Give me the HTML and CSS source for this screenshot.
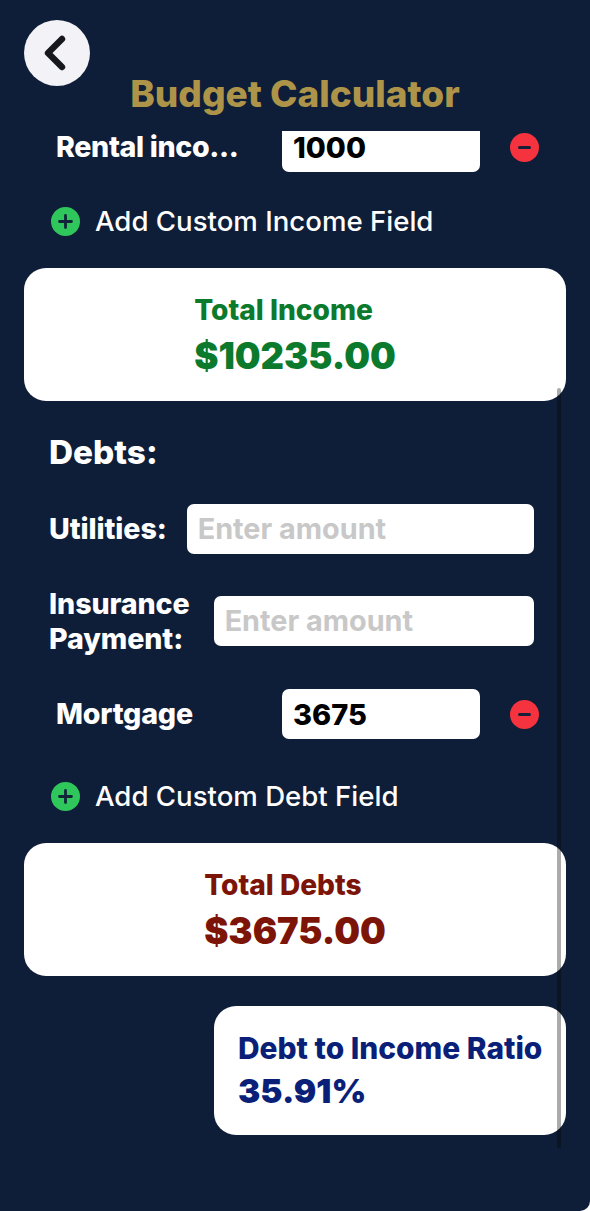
FILE: index.html
```html
<!DOCTYPE html>
<html lang="en">
<head>
<meta charset="utf-8">
<title>Budget Calculator</title>
<link rel="stylesheet" href="styles.css">
</head>
<body>
<main class="screen">
  <header class="header">
    <button class="back" aria-label="Back">
      <svg width="26" height="36" viewBox="0 0 26 36"><path d="M20 4 L6 18 L20 32" fill="none" stroke="#16181d" stroke-width="6.4" stroke-linecap="round" stroke-linejoin="round"/></svg>
    </button>
    <h1 class="title">Budget Calculator</h1>
  </header>
  <div class="scroll">
    <div class="content">
      <div class="custom-row cropped">
        <span class="custom-label rental">Rental inco...</span>
        <div class="field custom-field value">1000</div>
        <svg class="remove" viewBox="0 0 29 29"><circle cx="14.5" cy="14.5" r="14.5" fill="#f4333f"/><rect x="8" y="13" width="13" height="3" rx="1.5" fill="#16203a"/></svg>
      </div>
      <div class="add-row">
        <svg class="add-icon" viewBox="0 0 29 29"><circle cx="14.5" cy="14.5" r="14.5" fill="#2fc75b"/><path d="M14.5 8.5v12M8.5 14.5h12" stroke="#12243a" stroke-width="2.8" stroke-linecap="round"/></svg>
        <span>Add Custom Income Field</span>
      </div>
      <section class="card income-card">
        <div class="card-inner">
          <div class="card-title income">Total Income</div>
          <div class="card-value income">$10235.00</div>
        </div>
      </section>
      <h2 class="section">Debts:</h2>
      <div class="debt-row first">
        <label class="label">Utilities:</label>
        <div class="field placeholder">Enter amount</div>
      </div>
      <div class="debt-row second">
        <label class="label">Insurance<br>Payment:</label>
        <div class="field placeholder">Enter amount</div>
      </div>
      <div class="custom-row mortgage">
        <span class="custom-label">Mortgage</span>
        <div class="field custom-field value">3675</div>
        <svg class="remove" viewBox="0 0 29 29"><circle cx="14.5" cy="14.5" r="14.5" fill="#f4333f"/><rect x="8" y="13" width="13" height="3" rx="1.5" fill="#16203a"/></svg>
      </div>
      <div class="add-row debt-add">
        <svg class="add-icon" viewBox="0 0 29 29"><circle cx="14.5" cy="14.5" r="14.5" fill="#2fc75b"/><path d="M14.5 8.5v12M8.5 14.5h12" stroke="#12243a" stroke-width="2.8" stroke-linecap="round"/></svg>
        <span>Add Custom Debt Field</span>
      </div>
      <section class="card debt-card">
        <div class="card-inner">
          <div class="card-title debt">Total Debts</div>
          <div class="card-value debt">$3675.00</div>
        </div>
      </section>
      <section class="ratio-card">
        <div class="ratio-title ratio">Debt to Income Ratio</div>
        <div class="ratio-value ratio">35.91%</div>
      </section>
    </div>
    <div class="scrollbar"></div>
  </div>
</main>
</body>
</html>
```
FILE: styles.css
```css
* { box-sizing: border-box; }
html, body { margin: 0; padding: 0; background: #fff; }
body { width: 590px; height: 1211px; overflow: hidden; font-family: Inter, "Liberation Sans", sans-serif; }
.screen { width: 590px; height: 1211px; background: #0f1e38; color: #fff; border-bottom-right-radius: 10px; overflow: hidden; }
.header { height: 131px; padding: 20px 0 0 24px; }
.back { width: 66px; height: 66px; border: 0; border-radius: 50%; background: #f2f2f7; padding: 0 4px 0 0; display: flex; align-items: center; justify-content: center; }
.title { margin: -13px 0 0 -24px; font-size: 37px; line-height: 42px; font-weight: 800; color: #ad9449; text-align: center; }
.scroll { position: relative; height: 1080px; }
.content { padding: 0 24px; }
.custom-row { display: flex; align-items: center; height: 51px; padding-left: 32px; }
.custom-label { width: 226px; margin-top: 2px; font-size: 28.6px; line-height: 1; font-weight: 800; letter-spacing: -0.2px; }
.rental { letter-spacing: -0.35px; }
.field { height: 50px; background: #fff; border-radius: 7px; display: flex; align-items: center; padding: 2px 0 0 11px; flex: 1; font-size: 28.8px; line-height: 1; font-weight: 700; margin-right: 32px; }
.custom-field { flex: none; width: 198px; margin-right: 30px; }
.value { color: #000; font-size: 29px; font-weight: 800; }
.placeholder { color: #c8c8c8; }
.remove { width: 29px; height: 29px; margin-top: 1px; }
.cropped { height: 41px; align-items: flex-start; }
.cropped .field { height: 41px; align-items: flex-start; border-radius: 0 0 7px 7px; }
.cropped .remove { margin-top: 2px; }
.add-row { display: flex; align-items: center; gap: 15px; margin: 24px 0 0 27px; height: 50px; font-size: 27.6px; font-weight: 500; }
.add-icon { width: 29px; height: 29px; }
.card { margin-top: 22px; height: 133px; background: #fff; border-radius: 22px; display: flex; justify-content: center; padding-top: 24px; }
.card-title { font-size: 28.1px; line-height: 36px; font-weight: 800; }
.card-value { font-size: 36.3px; line-height: 50px; font-weight: 900; margin-top: 3px; }
.income { color: #0c7a2d; }
.debt { color: #7c1408; }
.ratio { color: #0a1f78; }
.section { margin: 32px 0 0 25px; font-size: 33.3px; line-height: 38px; font-weight: 800; }
.debt-row { display: flex; align-items: center; gap: 20px; padding-left: 25px; height: 51px; }
.first { margin-top: 32px; }
.second { margin-top: 41px; gap: 24px; }
.label { font-size: 28.6px; line-height: 35px; font-weight: 800; white-space: nowrap; letter-spacing: -0.1px; }
.mortgage { margin-top: 42px; }
.debt-add { margin-top: 32px; }
.ratio-card { margin: 30px 0 0 190px; height: 129px; background: #fff; border-radius: 22px; padding: 24px 0 0 24px; }
.ratio-title { font-size: 29.9px; line-height: 36px; font-weight: 800; white-space: nowrap; }
.ratio-value { font-size: 33.4px; line-height: 50px; font-weight: 900; }
.scrollbar { position: absolute; left: 557px; top: 257px; width: 4px; height: 760px; border-radius: 2px; background: rgba(0,0,0,.33); }
```
